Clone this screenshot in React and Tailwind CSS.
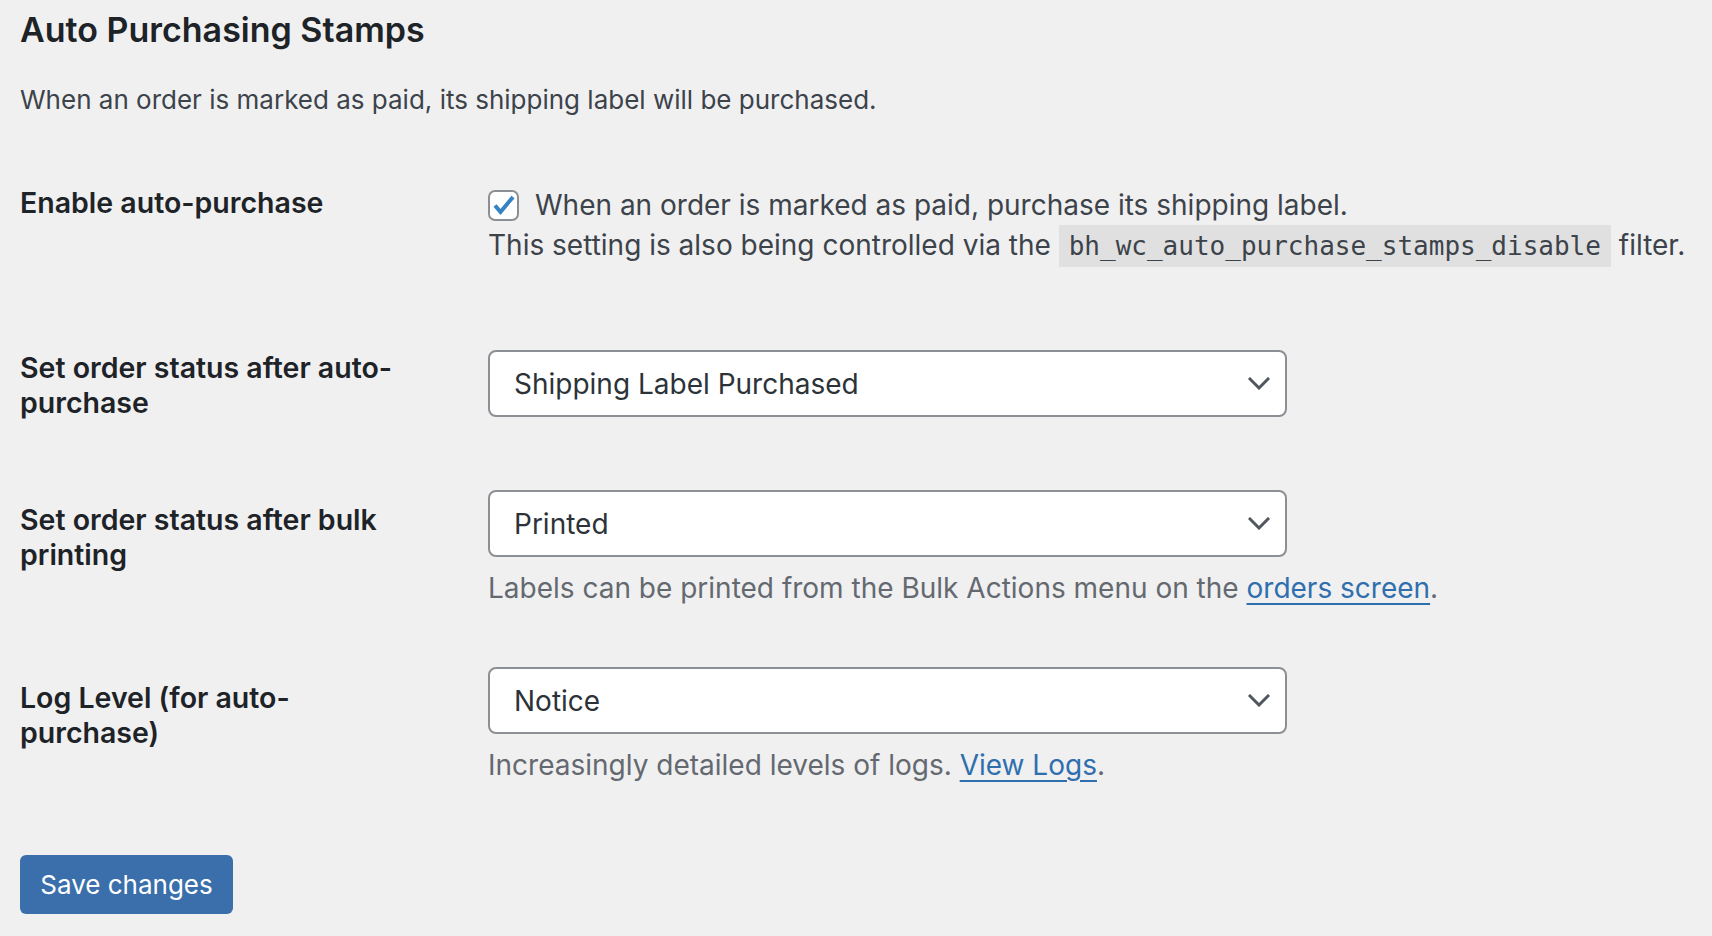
import React from "react";

const Chevron = () => (
  <svg width="22" height="13" viewBox="0 0 22 13" fill="none">
    <path d="M2 2l9 9 9-9" stroke="#50575e" strokeWidth="3" strokeLinecap="square" />
  </svg>
);

const FakeSelect = ({ value }) => (
  <div className="w-[799px] h-[67px] flex items-center justify-between pl-[24px] pr-[15px] bg-white border-2 border-[#8c8f94] rounded-[8px] text-[28px] text-[#2c3338]">
    <span>{value}</span>
    <Chevron />
  </div>
);

const App = () => {
  return (
    <div className="min-h-[936px] bg-[#f0f0f1] font-['Inter',_sans-serif] pl-[20px] pt-[10px] text-[#1d2327]">
      <h2 className="text-[34px] leading-[40px] font-semibold">Auto Purchasing Stamps</h2>
      <p className="mt-[32px] text-[26px] leading-[36px] text-[#3c434a]">
        When an order is marked as paid, its shipping label will be purchased.
      </p>

      {/* enable auto-purchase */}
      <div className="flex mt-[67px]">
        <div className="w-[468px] text-[28.5px] leading-[36px] font-semibold">Enable auto-purchase</div>
        <div className="text-[28px] leading-[40px] text-[#3c434a]">
          <div className="flex items-center">
            <span className="w-[31px] h-[31px] mr-[16px] flex items-center justify-center bg-white border-2 border-[#8c8f94] rounded-[7px]">
              <svg width="24" height="22" viewBox="0 0 24 22" fill="none">
                <path d="M3 11.5l5.5 6.5L21 3" stroke="#3582c4" strokeWidth="4" strokeLinejoin="miter" />
              </svg>
            </span>
            <span>When an order is marked as paid, purchase its shipping label.</span>
          </div>
          <div>
            This setting is also being controlled via the{" "}
            <code className="font-['DejaVu_Sans_Mono',_monospace] text-[26px] bg-[#e0e0e0] px-[10px] py-[6px]">
              bh_wc_auto_purchase_stamps_disable
            </code>{" "}
            filter.
          </div>
        </div>
      </div>

      {/* status after auto-purchase */}
      <div className="flex mt-[84px]">
        <div className="w-[468px] pr-[60px] text-[28.5px] leading-[35px] font-semibold">
          Set order status after auto-purchase
        </div>
        <FakeSelect value="Shipping Label Purchased" />
      </div>

      {/* status after bulk printing */}
      <div className="flex mt-[70px]">
        <div className="w-[468px] pr-[60px] pt-[12px] text-[28.5px] leading-[35px] font-semibold">
          Set order status after bulk printing
        </div>
        <div>
          <FakeSelect value="Printed" />
          <p className="mt-[13px] text-[28px] leading-[36px] text-[#646970]">
            Labels can be printed from the Bulk Actions menu on the{" "}
            <a href="#" className="text-[#2f6fad] underline underline-offset-[5px]">orders screen</a>.
          </p>
        </div>
      </div>

      {/* log level */}
      <div className="flex mt-[61px]">
        <div className="w-[468px] pr-[120px] pt-[13px] text-[28.5px] leading-[35px] font-semibold">
          Log Level (for auto-purchase)
        </div>
        <div>
          <FakeSelect value="Notice" />
          <p className="mt-[13px] text-[28px] leading-[36px] text-[#646970]">
            Increasingly detailed levels of logs.{" "}
            <a href="#" className="text-[#2f6fad] underline underline-offset-[5px]">View Logs</a>.
          </p>
        </div>
      </div>

      <button className="mt-[72px] w-[213px] h-[59px] rounded-[6px] bg-[#3a6fab] text-white text-[26px]">
        Save changes
      </button>
    </div>
  );
};

export default App;
